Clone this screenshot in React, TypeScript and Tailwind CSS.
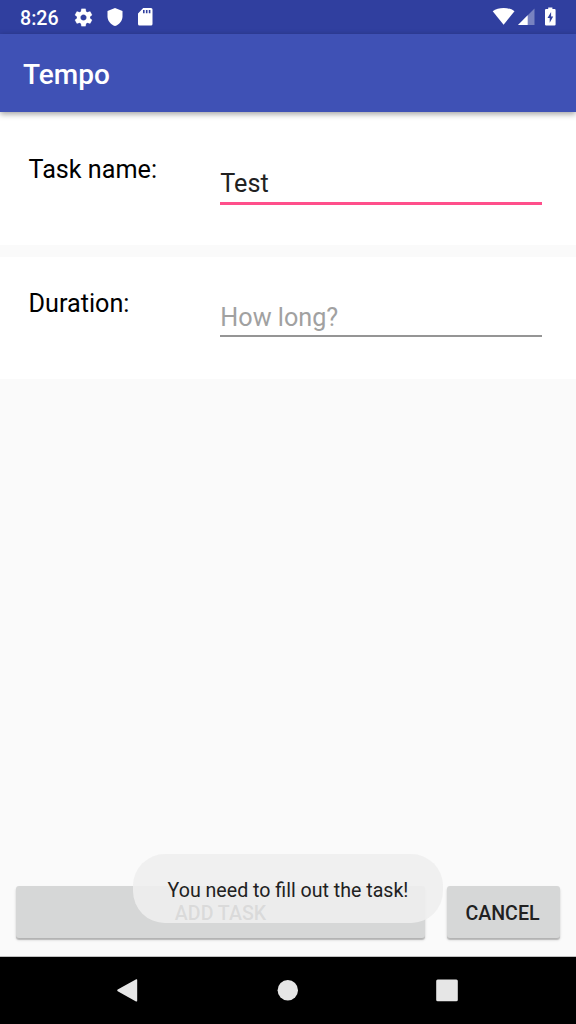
import React from "react";

function StatusBar() {
  return (
    <div className="flex h-[34px] shrink-0 items-center bg-[#303f9f] pl-5 text-white">
      <span className="w-[53px] pt-[3px] text-[19.6px] leading-[34px] font-medium">8:26</span>
      <svg className="h-[21px] w-[21px]" viewBox="0 0 24 24" fill="currentColor">
        <path stroke="currentColor" strokeWidth=".2" d="M19.43 12.98c.04-.32.07-.64.07-.98s-.03-.66-.07-.98l2.11-1.65c.19-.15.24-.42.12-.64l-2-3.46c-.12-.22-.39-.3-.61-.22l-2.49 1c-.52-.4-1.08-.73-1.69-.98l-.38-2.65C14.46 2.18 14.25 2 14 2h-4c-.25 0-.46.18-.49.42l-.38 2.65c-.61.25-1.17.59-1.69.98l-2.49-1c-.23-.09-.49 0-.61.22l-2 3.46c-.13.22-.07.49.12.64l2.11 1.65c-.04.32-.07.65-.07.98s.03.66.07.98l-2.11 1.65c-.19.15-.24.42-.12.64l2 3.46c.12.22.39.3.61.22l2.49-1c.52.4 1.08.73 1.69.98l.38 2.65c.03.24.24.42.49.42h4c.25 0 .46-.18.49-.42l.38-2.65c.61-.25 1.17-.59 1.69-.98l2.49 1c.23.09.49 0 .61-.22l2-3.46c.12-.22.07-.49-.12-.64l-2.11-1.65zM12 15.5c-1.93 0-3.500-1.570-3.500-3.500s1.570-3.500 3.500-3.500 3.500 1.570 3.500 3.500-1.570 3.500-3.500 3.500z" />
      </svg>
      <svg className="ml-[12.500px] h-[18px] w-4" viewBox="0 0 16 18" fill="currentColor">
        <path d="M8 0 15.500 2.900V8.300C15.500 12.800 12.400 16.800 8 18 3.600 16.800.5 12.800.5 8.300V2.900Z" />
      </svg>
      <svg className="ml-[14px] h-[18px] w-4" viewBox="0 0 16 18" fill="currentColor">
        <path fillRule="evenodd" d="M6.200 0H14Q15.500 0 15.500 1.500V16Q15.500 17.500 14 17.500H2.500Q1 17.500 1 16V5.500ZM6 2V5.300H7.600V2ZM8.900 2V5.300H10.500V2ZM11.800 2V5.300H13.400V2Z" />
      </svg>
      <svg className="ml-auto h-[34px] w-[86px]" viewBox="490 0 86 34" fill="currentColor">
        <path d="M492.700 11.200C498.500 6.800 508.700 6.800 514.500 11.200L503.600 24.800Z" />
        <path d="M534.500 8.500V25H518Z" opacity=".35" />
        <path d="M527.700 15.300V25H518Z" />
        <path fillRule="evenodd" d="M548.200 7.500H552.400V9H554.500Q555.600 9 555.600 10V24.500Q555.600 25.600 554.500 25.600H546.100Q545 25.600 545 24.500V10Q545 9 546.100 9H548.200ZM551.100 12 547.500 18H549.700V22.800L553.200 16.600H551.100Z" />
      </svg>
    </div>
  );
}

function TaskField({ label, children }: { label: string; children: React.ReactNode }) {
  return (
    <div className="flex pl-[28.500px]">
      <span className="w-[191.800px] shrink-0 text-[25.200px] leading-[30px] text-black">{label}</span>
      {children}
    </div>
  );
}

export default function App() {
  return (
    <div className="relative flex h-[1024px] w-[576px] flex-col overflow-hidden bg-[#fafafa] font-[Roboto,sans-serif]">
      <StatusBar />
      <header className="z-10 flex h-[78px] shrink-0 items-center bg-[#3f51b5] pt-[3px] pl-[23px] text-[28px] font-medium text-white shadow-[0_2px_6px_rgba(0,0,0,0.38)]">
        <h1 className="leading-[34px]">Tempo</h1>
      </header>

      <main className="flex grow flex-col">
        <section className="h-[133px] bg-white pt-[43px]">
          <TaskField label="Task name:">
            <div className="mt-[14px] h-[36px] w-[322px] border-b-[3px] border-[#ff4f8b] text-[25.200px] leading-[30px] text-[#212121]">
              Test
            </div>
          </TaskField>
        </section>
        <section className="mt-3 h-[121.500px] bg-white pt-[32px]">
          <TaskField label="Duration:">
            <div className="mt-[14px] h-[34px] w-[322px] border-b-2 border-[#959595] text-[25.200px] leading-[30px] text-[#a1a1a1]">
              How long?
            </div>
          </TaskField>
        </section>

        <div className="mt-auto mb-[18px] flex h-[52px] gap-[22px] px-4 text-[19.600px] font-medium text-[#212121]">
          <button className="grow rounded-[3px] bg-[#d6d7d7] pt-[3px] shadow-[0_2px_1px_rgba(0,0,0,0.18),0_2px_3px_rgba(0,0,0,0.14)]">ADD TASK</button>
          <button className="w-[113px] rounded-[3px] bg-[#d6d7d7] pt-[3px] pr-[8px] pl-[6px] shadow-[0_2px_1px_rgba(0,0,0,0.18),0_2px_3px_rgba(0,0,0,0.14)]">CANCEL</button>
        </div>
      </main>

      <nav className="flex h-[68px] shrink-0 border-t border-[#bfbfbf] bg-black">
        <svg className="h-[67px] w-[576px]" viewBox="0 957 576 67" fill="#e6e6e6">
          <path d="M136.200 979.300Q137.200 978.900 137.200 980V1000.500Q137.200 1002 136 1001.400L117.700 991.300Q116.500 990.400 117.700 989.600Z" />
          <circle cx="287.800" cy="990.200" r="10.200" />
          <rect x="436.200" y="979.600" width="21.600" height="21.600" rx="1.500" />
        </svg>
      </nav>

      <div className="absolute top-[854px] left-[133px] z-20 flex h-[69px] w-[310px] items-center justify-center rounded-[32px] bg-[#eeeeee]/90 pt-1 text-[19.600px] text-[#212121]">
        <span className="whitespace-nowrap">You need to fill out the task!</span>
      </div>
    </div>
  );
}
